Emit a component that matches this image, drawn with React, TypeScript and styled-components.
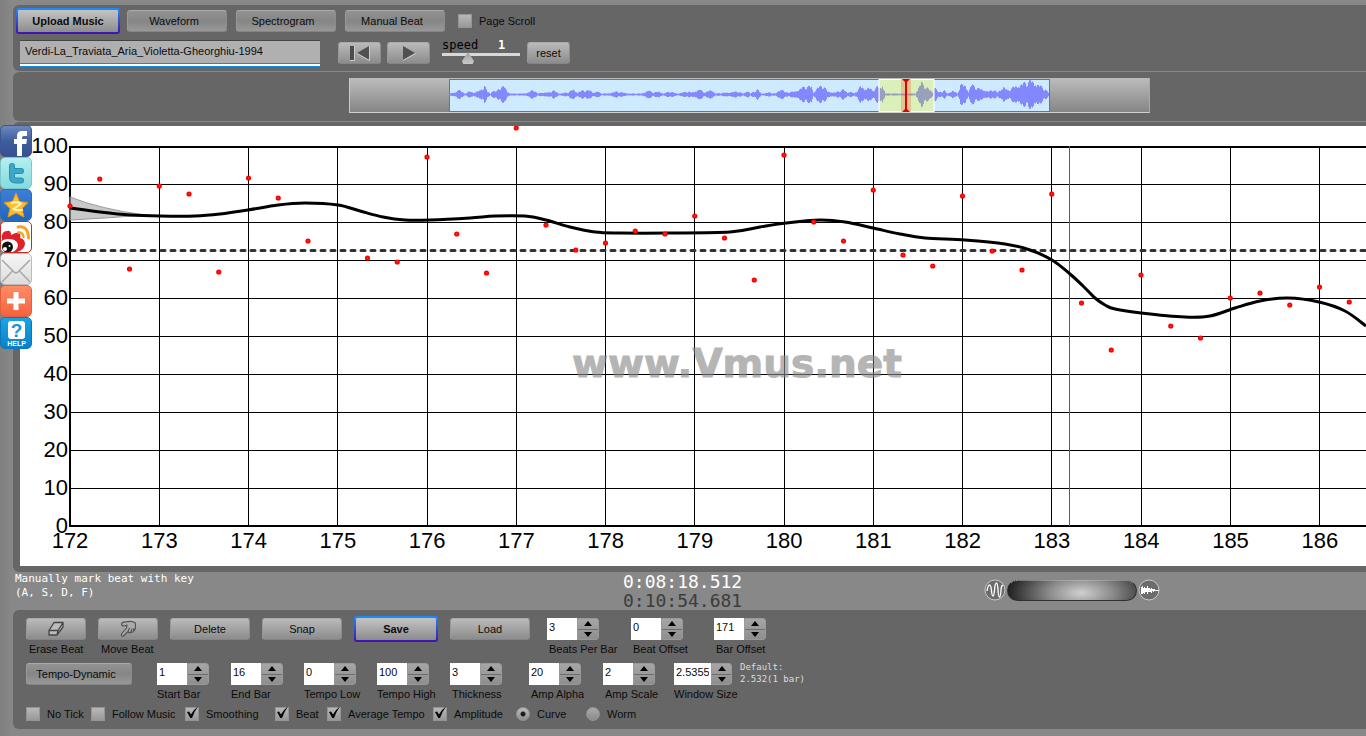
import React, { useId, useState } from 'react';
import styled, { createGlobalStyle, css } from 'styled-components';

const Global = createGlobalStyle`
  * { box-sizing: border-box; }
  body {
    margin: 0;
    background: #888;
    color: #0b0b0b;
    font: 11px/14px 'Liberation Sans', Arial, sans-serif;
  }
  button, input { font: inherit; color: inherit; }
`;

const mono = "'DejaVu Sans Mono', 'Liberation Mono', monospace";

const Page = styled.div`
  position: relative;
  min-height: 100vh;
  padding: 5px 0 6px 13px;
  background: linear-gradient(90deg, #808080 0, #888 13px);
`;

const Panel = styled.section`
  background: #666;
  border-radius: 6px 0 0 6px;
`;

const TopPanel = styled(Panel)`
  height: 66px;
  padding-top: 3px;
  margin-bottom: 1px;
`;

const OverviewPanel = styled(Panel)`
  padding: 6px 216px 8px 336px;
  margin-bottom: 1px;
`;

const ChartPanel = styled(Panel)`
  padding: 4px 0 6px 7px;
`;

const BottomPanel = styled(Panel)`
  height: 119px;
  padding: 6px 0 0 13px;
`;

const Row = styled.div<{ $gap?: number; $left?: number; $align?: string }>`
  display: flex;
  align-items: ${p => p.$align || 'center'};
  gap: ${p => p.$gap ?? 0}px;
  padding-left: ${p => p.$left ?? 0}px;
`;

const Button = styled.button<{ $w: number; $dim?: boolean; $primary?: boolean }>`
  display: flex;
  align-items: center;
  justify-content: center;
  flex: none;
  width: ${p => p.$w}px;
  height: 22px;
  padding: 0 ${p => (p.$dim ? 6 : 0)}px 0 0;
  border: 1px solid;
  border-color: #aaa #8c8c8c #858585 #999;
  border-radius: 3px;
  background: ${p => (p.$dim ? 'linear-gradient(#929292, #868686 50%, #989898)' : 'linear-gradient(#bababa, #8c8c8c)')};
  ${p =>
    p.$primary &&
    css`
      height: 26px;
      border: 2px solid transparent;
      background: linear-gradient(#c4c4c4, #8c8c8c) padding-box, linear-gradient(#1e8cff, #4010b0) border-box;
      font-weight: bold;
    `}
`;

const FileNameWrap = styled.div`
  padding-top: 6px;
`;

const FileName = styled.input`
  width: 300px;
  height: 27px;
  margin-right: 12px;
  padding: 0 5px 6px;
  border: 0;
  border-top: 1px solid #444;
  border-radius: 0;
  background: linear-gradient(#b0b0b0 22px, #0a8cf0 22px, #0a8cf0 23px, #fff 23px, #fff 25px, #0a8cf0 25px);
`;

const Transport = styled.div`
  display: flex;
  align-items: center;
  gap: 6px;
  padding: 8px 0 0 6px;
`;

const Speed = styled.div`
  display: grid;
  grid-template-columns: 56px 22px;
  width: 78px;
  margin: -4px 1px 0 6px;
  font: 12px/14px ${mono};
  color: #000;
`;

const SpeedValue = styled.output`
  color: #fff;
  font-weight: bold;
`;

const SpeedRange = styled.input`
  grid-column: 1 / -1;
  appearance: none;
  width: 78px;
  height: 12px;
  margin: 0;
  background: linear-gradient(#d8d8d8, #d8d8d8) 0 1px / 100% 3px no-repeat;
  &::-webkit-slider-thumb {
    appearance: none;
    width: 12px;
    height: 12px;
    background: linear-gradient(#a0a0a0, #c8c8c8);
    clip-path: polygon(50% 0, 100% 75%, 90% 100%, 10% 100%, 0 75%);
  }
`;

const CheckLabel = styled.label<{ $w?: number }>`
  position: relative;
  display: flex;
  align-items: center;
  gap: 7px;
  flex: none;
  ${p => p.$w && `width: ${p.$w}px;`}
  white-space: nowrap;
`;

const Box = styled.input<{ $round?: boolean }>`
  appearance: none;
  flex: none;
  width: 14px;
  height: 14px;
  margin: 0;
  border: 1px solid #949494;
  border-radius: ${p => (p.$round ? '50%' : '0')};
  background: ${p => (p.$round ? 'linear-gradient(#aaa, #8a8a8a)' : 'linear-gradient(#b8b8b8, #989898)')};
  &[type='radio']:checked {
    background: radial-gradient(circle, #111 0, #222 2px, transparent 3px), linear-gradient(#bbb, #8e8e8e);
  }
  &:checked + svg { display: block; }
`;

const TickMark = styled.svg`
  display: none;
  position: absolute;
  left: 1px;
  top: -1px;
  pointer-events: none;
`;

function Check({ label, on, w }: { label: string; on?: boolean; w?: number }) {
  return (
    <CheckLabel $w={w}>
      <Box type="checkbox" defaultChecked={on} />
      <TickMark width="13" height="13" viewBox="0 0 13 13">
        <path d="M1 6 L3 5.5 L5 8.5 Q7 4 12 0.5 Q8 6 6 12 L4.3 12 Z" fill="#050505" />
      </TickMark>
      {label}
    </CheckLabel>
  );
}

const Field = styled.div<{ $w: number }>`
  flex: none;
  width: ${p => p.$w}px;
`;

const Spinner = styled.div`
  display: flex;
  height: 22px;
`;

const SpinInput = styled.input<{ $wide?: boolean }>`
  width: ${p => (p.$wide ? 37 : 30)}px;
  height: 22px;
  padding: 0 2px 4px;
  border: 0;
  border-radius: 0;
  background: #fff;
`;

const SpinButtons = styled.div`
  display: flex;
  flex-direction: column;
  width: 22px;
  border: 1px solid #999;
  border-radius: 0 3px 3px 0;
  background: linear-gradient(#a6a6a6, #8e8e8e);
`;

const SpinButton = styled.button`
  display: flex;
  align-items: center;
  justify-content: center;
  flex: 1;
  padding: 0;
  border: 0;
  background: none;
  & + & { border-top: 1px solid #6e6e6e; }
`;

const Caption = styled.label<{ $indent?: number }>`
  display: block;
  margin-top: 2px;
  padding-left: ${p => p.$indent ?? 0}px;
  white-space: nowrap;
`;

function NumberField({ label, value, w, wide, indent }: { label: string; value: string; w: number; wide?: boolean; indent?: number }) {
  const id = useId();
  const [v, setV] = useState(value);
  const step = (d: number) => setV(String(Number(v) + d));
  return (
    <Field $w={w}>
      <Spinner>
        <SpinInput id={id} $wide={wide} value={v} onChange={e => setV(e.target.value)} />
        <SpinButtons>
          <SpinButton aria-label="Increase" onClick={() => step(1)}>
            <svg width="8" height="5"><path d="M0 5 L4 0 L8 5Z" /></svg>
          </SpinButton>
          <SpinButton aria-label="Decrease" onClick={() => step(-1)}>
            <svg width="8" height="5"><path d="M0 0 L4 5 L8 0Z" /></svg>
          </SpinButton>
        </SpinButtons>
      </Spinner>
      <Caption htmlFor={id} $indent={indent}>{label}</Caption>
    </Field>
  );
}

/* Overview strip of the whole recording */

const Overview = styled.div`
  display: flex;
  justify-content: center;
  height: 35px;
  min-width: 801px;
  border: 1px solid #bbb;
  border-color: #bbb #aaa #d0d0d0 #ccc;
  background: linear-gradient(#bbb, #858585);
`;

const envelope: [number, number][] = [
  [0, 1], [6, 2], [9, 6], [12, 3], [15, 1], [20, 3], [24, 2], [27, 3], [31, 4], [35, 9], [38, 3], [41, 1], [43, 4],
  [47, 3], [50, 7], [55, 8], [58, 3], [61, 1], [73, 1], [79, 2], [84, 5], [88, 1], [92, 2], [99, 2], [104, 4], [110, 1],
  [118, 2], [124, 5], [128, 2], [133, 4], [141, 4], [144, 2], [148, 3], [152, 1], [158, 1], [167, 3], [173, 2], [180, 1],
  [192, 1], [199, 4], [204, 2], [210, 3], [214, 1], [220, 3], [228, 1], [238, 3], [242, 2], [250, 5], [256, 2], [262, 5],
  [266, 1], [278, 2], [288, 3], [294, 1], [298, 4], [301, 1], [308, 5], [312, 1], [320, 2], [326, 1], [332, 6], [336, 2],
  [345, 3], [353, 7], [356, 8], [362, 8], [364, 2], [368, 7], [374, 9], [378, 3], [386, 2], [394, 5], [398, 2], [401, 3],
  [405, 1], [411, 8], [415, 6], [419, 7], [423, 4], [428, 8], [431, 7], [433, 10], [436, 1], [455, 1], [466, 1], [469, 7],
  [472, 12], [476, 8], [481, 4], [484, 2], [485, 9], [489, 2], [495, 4], [498, 1], [503, 4], [508, 1], [511, 10],
  [516, 9], [519, 3], [522, 10], [529, 6], [534, 5], [539, 3], [544, 5], [548, 2], [554, 8], [558, 4], [565, 8],
  [571, 10], [576, 12], [582, 14], [587, 11], [592, 8], [596, 5], [600, 1],
];

function wavePath() {
  let d = '';
  let s = 0;
  for (let x = 0; x < 600; x++) {
    while (s < envelope.length - 2 && envelope[s + 1][0] <= x) s++;
    const [x0, a0] = envelope[s];
    const [x1, a1] = envelope[s + 1];
    const a = a0 + ((a1 - a0) * (x - x0)) / (x1 - x0);
    const r = ((x * 7919 + x * x * 31) % 17) / 17;
    const h = Math.max(0.5, a * (0.65 + 0.45 * r));
    d += `M${x + 0.5} ${15.5 - h}V${15.5 + h}`;
  }
  return d;
}

function Wave() {
  return (
    <svg width="601" height="33" role="img" aria-label="Recording overview">
      <rect x="0.5" y="0.5" width="600" height="32" fill="#cdeafe" stroke="#0a90ee" />
      <path d={wavePath()} stroke="#8488ff" />
      <rect x="430" y="0.5" width="55" height="32" fill="#dff0a8" fillOpacity="0.78" stroke="#fff" />
      <path d={wavePath()} stroke="#8488b8" strokeOpacity="0.7" clipPath="url(#window)" />
      <clipPath id="window"><rect x="431" y="0" width="53" height="33" /></clipPath>
      <rect x="452" y="0" width="10" height="33" fill="#f06040" opacity="0.3" />
      <path d="M457 0V33" stroke="#e00000" strokeWidth="2" />
      <path d="M453 0H461L458 3H456Z M453 33H461L458 30H456Z" fill="#e00000" />
    </svg>
  );
}

/* Tempo chart */

const ChartBox = styled.div`
  height: 440px;
  overflow: hidden;
  background: #fff;
`;

const ChartSvg = styled.svg`
  display: block;
  width: 100%;
  height: 440px;
  font: 22px 'Liberation Sans', Arial, sans-serif;
`;

const Watermark = styled.text`
  font: bold 39px 'DejaVu Sans', sans-serif;
  fill: #888;
  stroke: #888;
  stroke-width: 1px;
  opacity: 0.62;
`;

const beats = [
  80, 53, 143, 60, 68, 146, 52, 72, 115, 0, 132, 136, 31, 108, 147, 2, 99, 124, 117, 105, 108, 90, 112, 154, 29, 96, 115,
  64, 129, 140, 70, 125, 144, 68, 177, 224, 149, 200, 212, 172, 167, 179, 161, 176,
];

const curve: [number, number][] = [
  [50, 82], [80, 86], [110, 89], [140, 90], [175, 90], [200, 88], [228, 84], [258, 79], [285, 77], [318, 79], [340, 85],
  [363, 91], [385, 94], [410, 94], [450, 92], [475, 90], [505, 90], [526, 94], [550, 101], [575, 106], [600, 107],
  [650, 107], [710, 106], [740, 101], [766, 97], [800, 94], [825, 96], [853, 102], [880, 108], [905, 112], [945, 114],
  [985, 118], [1010, 124], [1032, 134], [1050, 148], [1063, 160], [1075, 172], [1085, 179], [1095, 183], [1121, 187],
  [1165, 191], [1190, 190], [1215, 182], [1240, 175], [1268, 172], [1299, 176], [1325, 185], [1346, 200],
];

function smooth(p: [number, number][]) {
  let d = `M${p[0][0]} ${p[0][1]}`;
  for (let i = 0; i < p.length - 1; i++) {
    const a = p[i - 1] || p[i];
    const b = p[i];
    const c = p[i + 1];
    const e = p[i + 2] || c;
    d += `C${b[0] + (c[0] - a[0]) / 6} ${b[1] + (c[1] - a[1]) / 6} ${c[0] - (e[0] - b[0]) / 6} ${c[1] - (e[1] - b[1]) / 6} ${c[0]} ${c[1]}`;
  }
  return d;
}

function Chart() {
  const bars = Array.from({ length: 15 }, (_, i) => i);
  const levels = Array.from({ length: 11 }, (_, i) => i);
  return (
    <ChartSvg role="img" aria-label="Tempo curve">
      <g stroke="#000" shapeRendering="crispEdges">
        {levels.map(i => <line key={i} x1="50" x2="100%" y1={20.5 + 38 * i} y2={20.5 + 38 * i} />)}
        {bars.map(i => <line key={i} x1={50 + 89.27 * i} x2={50 + 89.27 * i} y1="20" y2="400" />)}
        <line x1="50" x2="100%" y1="21" y2="21" strokeWidth="2" />
        <line x1="50" x2="100%" y1="400" y2="400" strokeWidth="2" />
        <line x1="50" x2="50" y1="20" y2="401" strokeWidth="2" />
        <line x1="1049.5" x2="1049.5" y1="20" y2="400" stroke="#5f5f48" />
      </g>
      <Watermark x="552" y="251">www.Vmus.net</Watermark>
      {levels.map(i => <text key={i} x="48" y={27 + 38 * i} textAnchor="end">{100 - 10 * i}</text>)}
      {bars.map(i => <text key={i} x={50 + 89.27 * i} y="422" textAnchor="middle">{172 + i}</text>)}
      <path d="M50 71 Q80 83 125 89 Q90 92 50 94Z" fill="#888" fillOpacity="0.45" stroke="#999" strokeWidth="1" />
      <line x1="51" x2="100%" y1="124.5" y2="124.5" stroke="#333" strokeWidth="3" strokeDasharray="4 6" strokeLinecap="round" />
      <path d={smooth(curve)} fill="none" stroke="#000" strokeWidth="3" />
      {beats.map((y, i) => y > 0 && (
        <circle key={i} cx={50 + 29.75 * i} cy={y} r="1.7" fill="#ff3c3c" stroke="#f00" strokeWidth="1.8" />
      ))}
    </ChartSvg>
  );
}

/* Status strip */

const Status = styled.div`
  display: grid;
  grid-template-columns: 608px 361px auto;
  height: 38px;
  padding-left: 2px;
`;

const Hint = styled.p`
  margin: 0;
  color: #fff;
  font: 11px/14px ${mono};
`;

const Clock = styled.div`
  color: #fff;
  font: 18px/19px ${mono};
`;

const Total = styled.div`
  color: #3c3c3c;
`;

const Zoomer = styled.div`
  display: flex;
  align-items: center;
  gap: 1px;
  height: 36px;
`;

const ZoomRange = styled.input`
  appearance: none;
  width: 130px;
  height: 21px;
  margin: 0;
  border: 1px solid #303030;
  border-top: 1px dotted #aaa;
  border-radius: 11px;
  background: radial-gradient(ellipse 75px 34px at 73px 12px, #d0d0d0, #8c8c8c 42%, #1c1c1c);
  &::-webkit-slider-thumb { appearance: none; width: 10px; height: 20px; background: none; }
`;

const DefaultNote = styled.p`
  margin: -2px 0 0 8px;
  color: #ddd;
  font: 9px/12px ${mono};
`;

/* Share links */

const Share = styled.nav`
  position: absolute;
  left: 0;
  top: 125px;
  display: flex;
  flex-direction: column;
`;

const ShareLink = styled.a<{ $bg: string; $edge: string }>`
  display: block;
  width: 32px;
  height: 32px;
  border: 1px solid ${p => p.$edge};
  border-radius: 5px;
  background: ${p => p.$bg};
  overflow: hidden;
  svg { display: block; }
`;

const HelpText = styled.text`
  font: bold 7px 'Liberation Sans', Arial, sans-serif;
`;

const HelpMark = styled.text`
  font: bold 19px 'Liberation Sans', Arial, sans-serif;
`;

function ShareBar() {
  return (
    <Share aria-label="Share">
      <ShareLink href="#facebook" aria-label="Facebook" $edge="#3a5694" $bg="linear-gradient(#6d88bf, #3f5d9d 50%, #35528f)">
        <svg width="30" height="30" viewBox="0 0 30 30">
          <path d="M16 30V18H13V13H16V10Q16 5 21 5H26V10H22.500Q21 10 21 12V13H26L25.300 18H21V30Z" fill="#fff" />
        </svg>
      </ShareLink>
      <ShareLink href="#twitter" aria-label="Twitter" $edge="#7cc8cc" $bg="linear-gradient(#b4efee, #84dcdf)">
        <svg width="30" height="30" viewBox="0 0 30 30">
          <path d="M11 8V19Q11 22.500 14.500 22.500H20M11 13H20" fill="none" stroke="#2a8fb5" strokeWidth="6" strokeLinecap="round" strokeLinejoin="round" />
          <path d="M11 8V19Q11 22.500 14.500 22.500H20M11 13H20" fill="none" stroke="#3fa6c8" strokeWidth="4" strokeLinecap="round" strokeLinejoin="round" />
        </svg>
      </ShareLink>
      <ShareLink href="#qzone" aria-label="Qzone" $edge="#2a6abf" $bg="linear-gradient(#3c7fd4, #2265bc)">
        <svg width="30" height="30" viewBox="0 0 30 30">
          <path d="M15 3L18.500 11.500L27 12.500L21 18.500L23 27L15 23L7 27L9 18.500L3 12.500L11.500 11.500Z" fill="#ffbe2e" stroke="#e89410" />
          <path d="M10 13Q16 11.500 20 13.500L12.500 19Q17 21 22 19.500" fill="none" stroke="#fff3b8" strokeWidth="2" />
        </svg>
      </ShareLink>
      <ShareLink href="#weibo" aria-label="Weibo" $edge="#c62a22" $bg="#fff">
        <svg width="30" height="30" viewBox="0 0 30 30">
          <path d="M1 17Q0 9 6 9Q10 8 10 13Q17 9 19 12Q20 14 19 16Q24 17 24 22Q23 28 16 30H0V20Z" fill="#e0202a" />
          <ellipse cx="7" cy="24" rx="10" ry="7" fill="#fff" transform="rotate(-8 7 24)" />
          <circle cx="6.500" cy="25" r="5.500" fill="#111" />
          <circle cx="4" cy="27" r="2" fill="#fff" />
          <circle cx="8.500" cy="24" r="1" fill="#fff" />
          <path d="M17 5Q27 3 27.500 16" fill="none" stroke="#f6a523" strokeWidth="3" strokeLinecap="round" />
          <path d="M17 10.500Q22 10 22.500 15" fill="none" stroke="#f6a523" strokeWidth="2.500" strokeLinecap="round" />
        </svg>
      </ShareLink>
      <ShareLink href="#mail" aria-label="Mail" $edge="#bbb" $bg="linear-gradient(#f6f6f6, #dcdcdc)">
        <svg width="30" height="30" viewBox="0 0 30 30" fill="none" stroke="#a8a8a8" strokeWidth="1.500">
          <path d="M1 6L13 18Q15 20 17 18L29 6M1 28L11.500 17M29 28L18.500 17" />
        </svg>
      </ShareLink>
      <ShareLink href="#more" aria-label="More" $edge="#e0603e" $bg="linear-gradient(#ff8c66, #f4633e)">
        <svg width="30" height="30" viewBox="0 0 30 30">
          <path d="M15 6V24M6 15H24" stroke="#fff" strokeWidth="5" />
        </svg>
      </ShareLink>
      <ShareLink href="#help" aria-label="Help" $edge="#0a78b8" $bg="linear-gradient(#1ba4e4, #0a80c8)">
        <svg width="30" height="30" viewBox="0 0 30 30" textAnchor="middle">
          <rect x="7" y="3" width="17" height="18" rx="3" fill="#fff" />
          <HelpMark x="15.500" y="19" fill="#1498d8">?</HelpMark>
          <HelpText x="15.500" y="28" fill="#fff">HELP</HelpText>
        </svg>
      </ShareLink>
    </Share>
  );
}

const ToolColumn = styled.div`
  display: flex;
  flex-direction: column;
  width: 60px;
  padding-top: 2px;
`;

const ToolRow = styled.div`
  display: flex;
  gap: 12px;
  height: 47px;
`;

const Raised = styled.div`
  padding-top: 2px;
`;

const Fields = styled.div`
  display: flex;
  padding: 2px 0 0 5px;
`;

const Options = styled.div`
  display: flex;
  align-items: center;
  padding-top: 6px;
`;

export default function App() {
  const [speed, setSpeed] = useState(1);
  return (
    <>
      <Global />
      <Page>
        <TopPanel>
          <Row $gap={7} $left={3}>
            <Button $w={104} $primary>Upload Music</Button>
            <Row $gap={9}>
              <Button $w={100} $dim>Waveform</Button>
              <Button $w={100} $dim>Spectrogram</Button>
              <Button $w={100} $dim>Manual Beat</Button>
            </Row>
            <Row $left={6}><Check label="Page Scroll" /></Row>
          </Row>
          <Row $left={7} $align="flex-start">
            <FileNameWrap>
              <FileName aria-label="Recording" defaultValue="Verdi-La_Traviata_Aria_Violetta-Gheorghiu-1994" />
            </FileNameWrap>
            <Transport>
              <Button $w={43} aria-label="Rewind">
                <svg width="24" height="16">
                  <rect x="2" y="1" width="4" height="14" fill="#4c4c4c" />
                  <path d="M6.500 1V15.500H2" fill="none" stroke="#ccc" />
                  <path d="M21 1L9 8L21 15Z" fill="#505050" />
                  <path d="M9 8.500L21.500 15.500V1" fill="none" stroke="#ccc" />
                </svg>
              </Button>
              <Button $w={43} aria-label="Play">
                <svg width="16" height="16">
                  <path d="M2 1L14 8L2 15Z" fill="#505050" />
                  <path d="M2 15.500L14.500 8.500" fill="none" stroke="#ccc" />
                </svg>
              </Button>
              <Speed>
                <label htmlFor="speed">speed</label>
                <SpeedValue htmlFor="speed">{speed}</SpeedValue>
                <SpeedRange id="speed" type="range" min={0} max={3.3} step={0.1} value={speed} onChange={e => setSpeed(Number(e.target.value))} />
              </Speed>
              <Button $w={43} onClick={() => setSpeed(1)}>reset</Button>
            </Transport>
          </Row>
        </TopPanel>
        <OverviewPanel>
          <Overview><Wave /></Overview>
        </OverviewPanel>
        <ChartPanel>
          <ChartBox><Chart /></ChartBox>
        </ChartPanel>
        <Status>
          <Hint>Manually mark beat with key<br />(A, S, D, F)</Hint>
          <Clock>0:08:18.512<Total>0:10:54.681</Total></Clock>
          <Zoomer>
            <svg width="22" height="22" fill="none" stroke="#fff">
              <circle cx="11" cy="11" r="10" fill="#6c6c6c" stroke="#c8c8c8" />
              <path d="M3 12Q4 6 5.500 6Q7 6 7.500 12Q8 17 9 17Q10 17 10.500 11Q11 4 12.500 4Q13.500 4 14 11Q14.500 18 15.500 18Q16.500 18 17 11Q17.500 5 19 7" strokeWidth="1.300" />
            </svg>
            <ZoomRange type="range" aria-label="Zoom" />
            <svg width="22" height="22" stroke="#fff">
              <circle cx="11" cy="11" r="10" fill="#6c6c6c" stroke="#c8c8c8" />
              <path d="M3.500 8V15M4.500 7V15M5.500 9V14M6.500 8V15M7.500 9V13M8.500 9V13M9.500 7V15M10.500 9V13M11.500 9V13M12.500 10V13M13.500 9V14M14.500 10V12M15.500 10V13M16.500 10V12M12 11.500H21" />
            </svg>
          </Zoomer>
        </Status>
        <BottomPanel>
          <ToolRow>
            <ToolColumn>
              <Button id="erase" $w={60} aria-label="Erase Beat">
                <svg width="18" height="16" fill="#bbb" stroke="#444" strokeWidth="1.300">
                  <path d="M7 1.500H16L11 9.500H2Z M2 9.500V14H10L11 9.500M11 9.500L16 1.500V6L10 14" strokeLinejoin="round" />
                </svg>
              </Button>
              <Caption htmlFor="erase" $indent={3}>Erase Beat</Caption>
            </ToolColumn>
            <ToolColumn>
              <Button id="move" $w={60} aria-label="Move Beat">
                <svg width="18" height="18" fill="#aaa" stroke="#505050" strokeWidth="1.100" strokeLinejoin="round">
                  <path d="M7 2Q3 1.500 2.500 4Q2.500 6 5 6Q7 6 8 5L7.500 8L2.500 14Q2 16.500 4.500 16L9 11.500Q10 14 12 12Q13.500 13 14.500 11Q16.500 10 16.500 7V3L13 1.500Q10 1 7 2Z" />
                  <path d="M9 11.500L10.500 8M12 12L13 8.500M14.500 11L15 8" fill="none" />
                </svg>
              </Button>
              <Caption htmlFor="move" $indent={3}>Move Beat</Caption>
            </ToolColumn>
            <Raised><Button $w={80}>Delete</Button></Raised>
            <Raised><Button $w={80}>Snap</Button></Raised>
            <div><Button $w={84} $primary>Save</Button></div>
            <Raised><Button $w={80}>Load</Button></Raised>
            <Fields>
              <NumberField label="Beats Per Bar" value="3" w={84} indent={2} />
              <NumberField label="Beat Offset" value="0" w={83} indent={2} />
              <NumberField label="Bar Offset" value="171" w={83} indent={2} />
            </Fields>
          </ToolRow>
          <Row $align="flex-start">
            <Button $w={106} $dim>Tempo-Dynamic</Button>
            <Row $left={25} $align="flex-start">
              <NumberField label="Start Bar" value="1" w={74} />
              <NumberField label="End Bar" value="16" w={73} />
              <NumberField label="Tempo Low" value="0" w={73} />
              <NumberField label="Tempo High" value="100" w={73} />
              <NumberField label="Thickness" value="3" w={79} indent={2} />
              <NumberField label="Amp Alpha" value="20" w={74} indent={2} />
              <NumberField label="Amp Scale" value="2" w={71} indent={2} />
              <NumberField label="Window Size" value="2.5355" w={58} wide />
            </Row>
            <DefaultNote>Default:<br />2.532(1 bar)</DefaultNote>
          </Row>
          <Options>
            <Check label="No Tick" w={65} />
            <Check label="Follow Music" w={94} />
            <Check label="Smoothing" on w={90} />
            <Check label="Beat" on w={52} />
            <Check label="Average Tempo" on w={106} />
            <Check label="Amplitude" on w={83} />
            <CheckLabel $w={70}><Box $round type="radio" name="view" defaultChecked />Curve</CheckLabel>
            <CheckLabel><Box $round type="radio" name="view" />Worm</CheckLabel>
          </Options>
        </BottomPanel>
        <ShareBar />
      </Page>
    </>
  );
}
